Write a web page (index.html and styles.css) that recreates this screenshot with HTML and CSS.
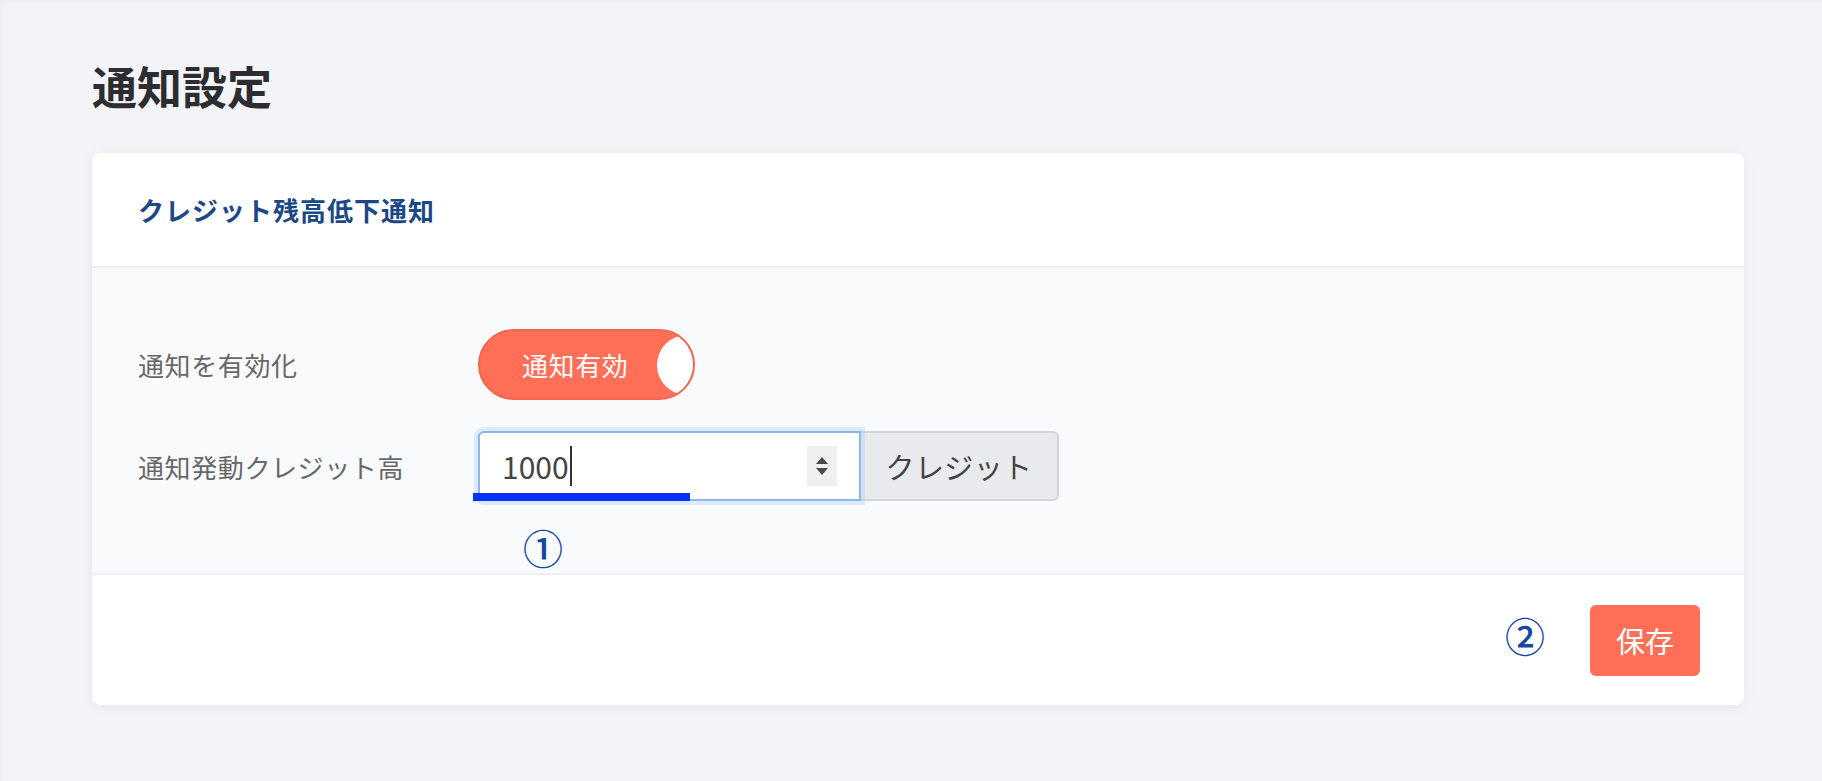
FILE: index.html
```html
<!DOCTYPE html>
<html lang="ja">
<head>
<meta charset="utf-8">
<title>通知設定</title>
<link rel="stylesheet" href="styles.css">
</head>
<body>
<div class="page">
  <h1 class="page-title">通知設定</h1>
  <section class="card">
    <header class="card-header">
      <h2 class="card-title">クレジット残高低下通知</h2>
    </header>
    <div class="card-body">
      <div class="form-row">
        <label class="form-label">通知を有効化</label>
        <div class="toggle">
          <span class="toggle-text">通知有効</span>
          <span class="toggle-knob"></span>
        </div>
      </div>
      <div class="form-row">
        <label class="form-label">通知発動クレジット高</label>
        <div class="input-group">
          <div class="input">
            <span class="input-value">1000</span><span class="caret"></span>
            <svg class="spinner" width="30" height="40" viewBox="0 0 30 40">
              <rect x="0" y="0" width="30" height="40" fill="#efefef"/>
              <polygon points="15,11 21,18 9,18" fill="#4a4a4a"/>
              <polygon points="9,22 21,22 15,29" fill="#4a4a4a"/>
            </svg>
          </div>
          <div class="addon">クレジット</div>
          <span class="mark-underline"></span>
          <span class="mark-num mark-one">①</span>
        </div>
      </div>
    </div>
    <footer class="card-footer">
      <span class="mark-num">②</span>
      <button class="btn-save" type="button">保存</button>
    </footer>
  </section>
</div>
</body>
</html>
```
FILE: styles.css
```css
* {
  box-sizing: border-box;
}

html, body {
  margin: 0;
  padding: 0;
}

body {
  background: #f3f4f7;
  font-family: "Noto Sans CJK JP", "Noto Sans", sans-serif;
  color: #333;
  width: 1822px;
  height: 781px;
  overflow: hidden;
  box-shadow: inset 5px 5px 6px -3px rgba(0, 0, 0, 0.03);
}

.page {
  padding: 52px 78px 0 92px;
}

.page-title {
  margin: 0 0 33px 0;
  font-size: 45px;
  line-height: 68px;
  font-weight: 700;
  color: #2c2c31;
  letter-spacing: 0;
}

.card {
  background: #fff;
  border-radius: 8px;
  box-shadow: 0 2px 14px rgba(30, 40, 80, 0.06);
  overflow: hidden;
}

.card-header {
  height: 115px;
  display: flex;
  align-items: center;
  padding: 0 46px;
  border-bottom: 2px solid #eceef2;
}

.card-title {
  margin: 0;
  font-size: 26px;
  font-weight: 700;
  color: #1b4886;
  letter-spacing: 1px;
}

.card-body {
  background: #f9fafc;
  padding: 61px 46px 72px 46px;
  display: flex;
  flex-direction: column;
  gap: 31px;
  border-bottom: 2px solid #eceef2;
}

.form-row {
  display: flex;
  align-items: center;
}

.form-label {
  width: 340px;
  font-size: 26px;
  color: #676767;
  letter-spacing: 0.6px;
}

.toggle {
  width: 217px;
  height: 71px;
  border-radius: 36px;
  background: #ff6f57;
  border: 2px solid #f0664f;
  display: flex;
  align-items: center;
  padding-left: 42px;
  overflow: hidden;
}

.toggle-text {
  color: #fff;
  font-size: 26px;
  letter-spacing: 0.6px;
}

.toggle-knob {
  margin-left: auto;
  margin-right: -24px;
  width: 60px;
  height: 60px;
  border-radius: 50%;
  background: #fff;
  flex: none;
}

.input-group {
  position: relative;
  display: flex;
  height: 70px;
}

.input {
  width: 383px;
  height: 70px;
  background: #fff;
  border: 2px solid #8db6ea;
  border-radius: 6px 0 0 6px;
  box-shadow: 0 0 0 4px rgba(170, 204, 245, 0.35);
  display: flex;
  align-items: center;
  padding: 0 22px 0 22px;
  position: relative;
  z-index: 1;
}

.input-value {
  font-size: 30px;
  color: #444;
}

.caret {
  width: 2px;
  height: 40px;
  background: #333;
  margin-left: 1px;
}

.spinner {
  margin-left: auto;
  display: block;
}

.addon {
  width: 200px;
  height: 70px;
  margin-left: -2px;
  background: #e9eaed;
  border: 2px solid #d2d4d8;
  border-radius: 0 6px 6px 0;
  display: flex;
  align-items: center;
  justify-content: center;
  font-size: 29px;
  color: #444;
  letter-spacing: 0.4px;
}

.mark-underline {
  position: absolute;
  left: -5px;
  top: 62px;
  width: 217px;
  height: 8px;
  background: #0033ff;
  z-index: 2;
}

.mark-num {
  font-size: 40px;
  line-height: 40px;
  color: #1546a6;
  font-weight: 500;
}

.mark-one {
  position: absolute;
  left: 45px;
  top: 96px;
}

.card-footer {
  height: 130px;
  display: flex;
  align-items: center;
  justify-content: flex-end;
  gap: 45px;
  padding: 0 44px;
}

.card-footer .mark-num {
  margin-top: -10px;
}

.btn-save {
  width: 110px;
  height: 71px;
  border: none;
  border-radius: 6px;
  background: #ff6f57;
  color: #fff;
  font-family: "Noto Sans CJK JP", "Noto Sans", sans-serif;
  font-size: 29px;
  padding: 0;
}
```
